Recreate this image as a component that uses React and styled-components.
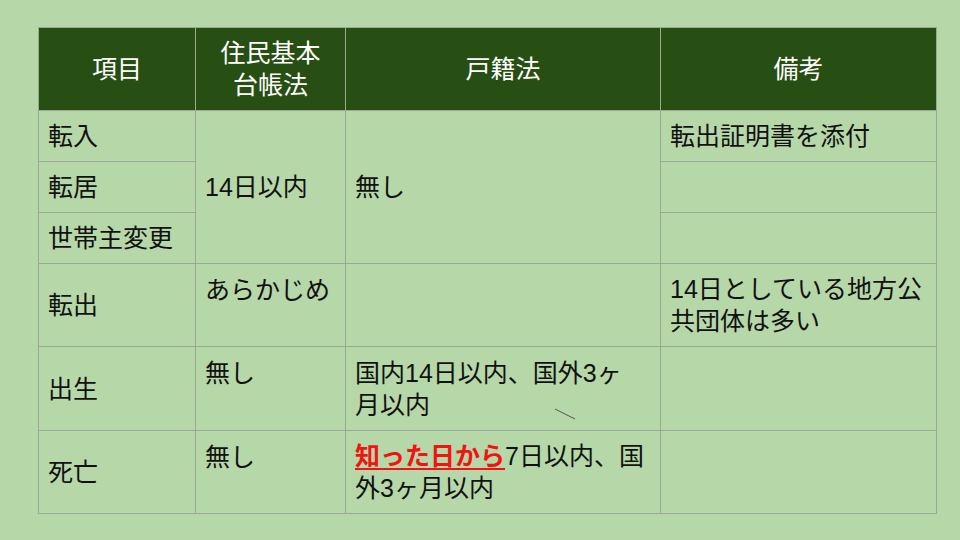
import React from "react";
import styled, { createGlobalStyle } from "styled-components";

const GlobalStyle = createGlobalStyle`
  html, body {
    margin: 0;
    padding: 0;
    background: #b6d7a8;
  }
  body {
    font-family: "Liberation Sans", "Noto Sans CJK JP", sans-serif;
  }
`;

const Slide = styled.div`
  width: 960px;
  height: 540px;
  box-sizing: border-box;
  padding: 27px 0 0 38px;
  background: #b6d7a8;
`;

const Table = styled.table`
  border-collapse: collapse;
  table-layout: fixed;
  width: 898px;
  font-size: 25px;
  line-height: 32px;
  color: #111;
`;

const HeadRow = styled.tr`
  height: 83px;
`;

const Row = styled.tr`
  height: ${(p) => p.$h}px;
`;

const HeadCell = styled.th`
  background: #274e13;
  color: #fff;
  font-weight: normal;
  text-align: center;
  vertical-align: middle;
  border: 1px solid #9aa894;
  padding: 0 6px;
  white-space: nowrap;
`;

const Cell = styled.td`
  position: relative;
  border: 1px solid #9aa894;
  padding: ${(p) => (p.$top ? "10px 9px 0" : "0 9px")};
  vertical-align: ${(p) => (p.$top ? "top" : "middle")};
  text-align: left;
  white-space: nowrap;
`;

const Mark = styled.span`
  color: #f01414;
  font-weight: bold;
  text-decoration: underline;
  text-decoration-thickness: 2px;
  text-underline-offset: 3px;
`;

const Stroke = styled.svg`
  position: absolute;
  left: 207px;
  top: 60px;
  width: 24px;
  height: 14px;
  pointer-events: none;
`;

export default function App() {
  return (
    <>
      <GlobalStyle />
      <Slide>
        <Table>
          <colgroup>
            <col style={{ width: 157 }} />
            <col style={{ width: 150 }} />
            <col style={{ width: 315 }} />
            <col style={{ width: 276 }} />
          </colgroup>
          <thead>
            <HeadRow>
              <HeadCell>項目</HeadCell>
              <HeadCell>
                住民基本
                <br />
                台帳法
              </HeadCell>
              <HeadCell>戸籍法</HeadCell>
              <HeadCell>備考</HeadCell>
            </HeadRow>
          </thead>
          <tbody>
            <Row $h={51}>
              <Cell>転入</Cell>
              <Cell rowSpan={3}>14日以内</Cell>
              <Cell rowSpan={3}>無し</Cell>
              <Cell>転出証明書を添付</Cell>
            </Row>
            <Row $h={51}>
              <Cell>転居</Cell>
              <Cell />
            </Row>
            <Row $h={51}>
              <Cell>世帯主変更</Cell>
              <Cell />
            </Row>
            <Row $h={83}>
              <Cell>転出</Cell>
              <Cell $top>あらかじめ</Cell>
              <Cell />
              <Cell>
                14日としている地方公
                <br />
                共団体は多い
              </Cell>
            </Row>
            <Row $h={84}>
              <Cell>出生</Cell>
              <Cell $top>無し</Cell>
              <Cell>
                国内14日以内、国外3ヶ
                <br />
                月以内
                <Stroke viewBox="0 0 24 14">
                  <line x1="2" y1="2" x2="22" y2="12" stroke="#555" strokeWidth="1" />
                </Stroke>
              </Cell>
              <Cell />
            </Row>
            <Row $h={83}>
              <Cell>死亡</Cell>
              <Cell $top>無し</Cell>
              <Cell>
                <Mark>知った日から</Mark>7日以内、国
                <br />
                外3ヶ月以内
              </Cell>
              <Cell />
            </Row>
          </tbody>
        </Table>
      </Slide>
    </>
  );
}
